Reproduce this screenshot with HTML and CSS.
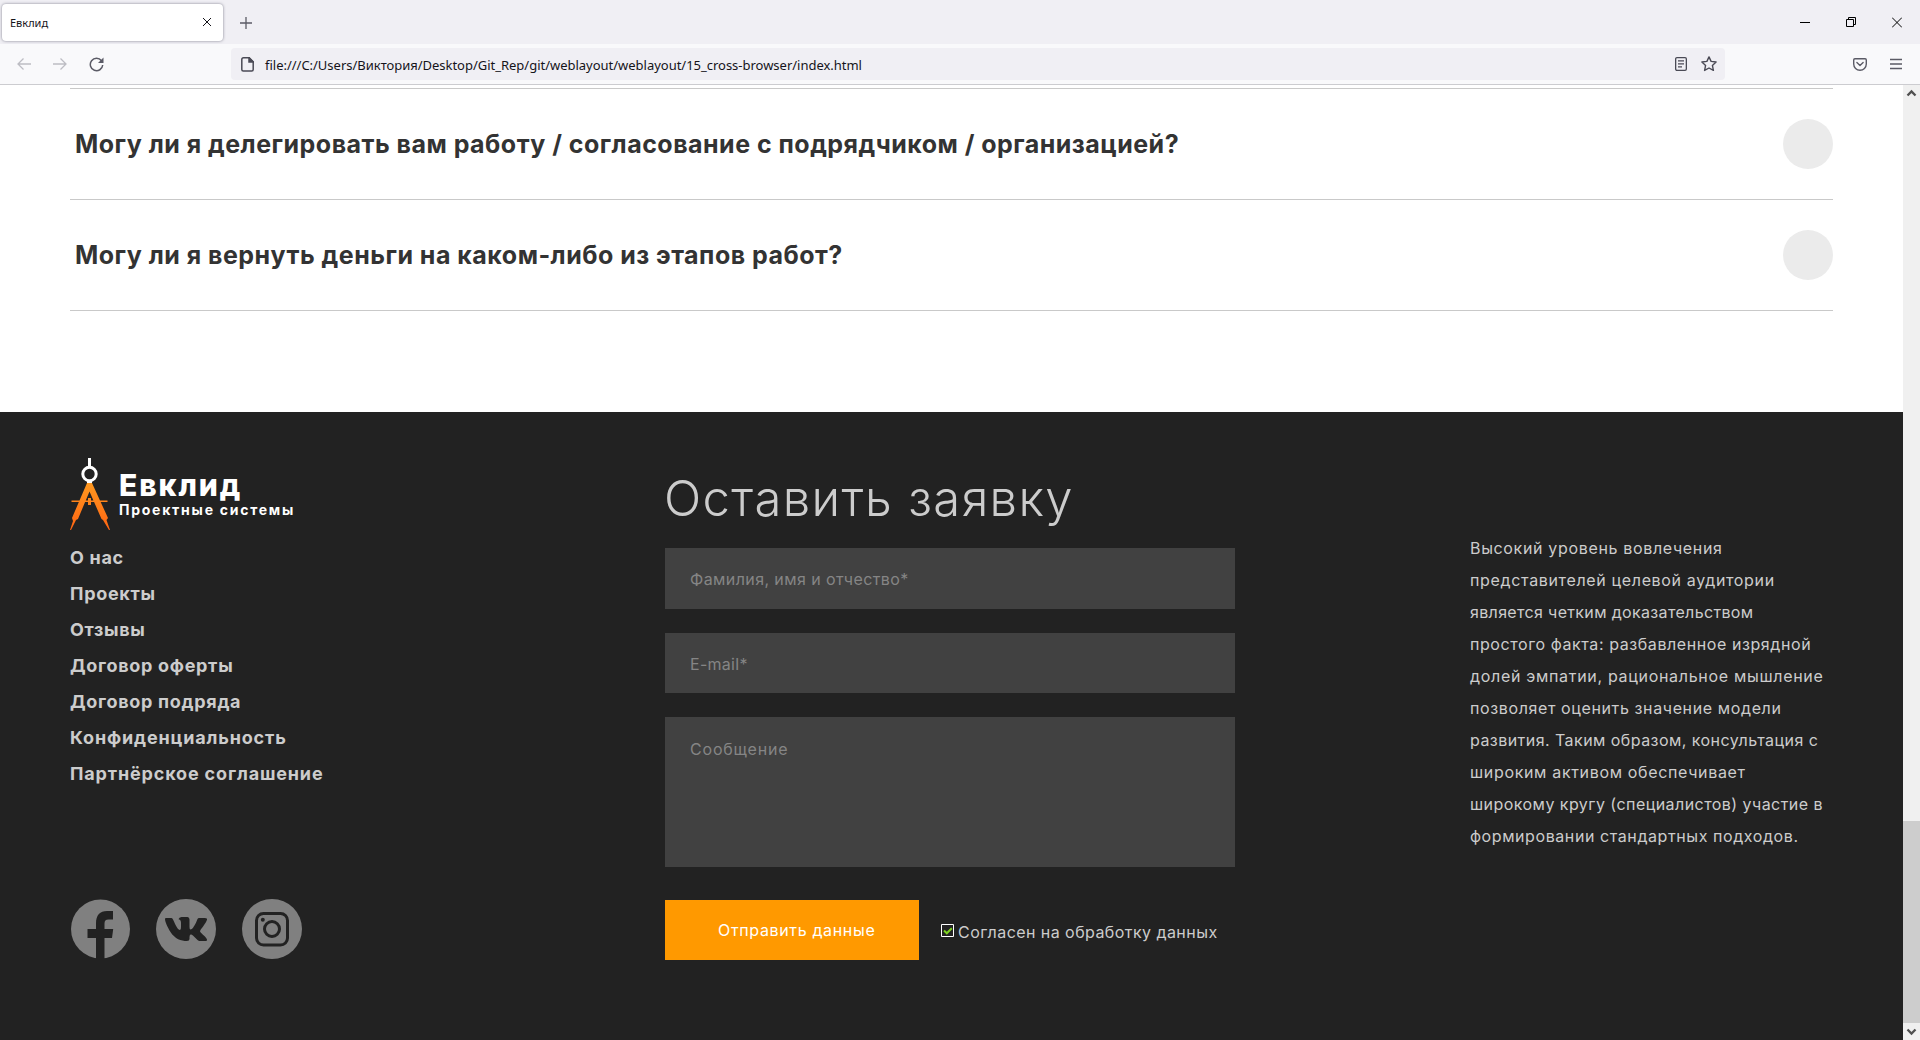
FILE: index.html
```html
<!DOCTYPE html>
<html lang="ru">
<head>
<meta charset="utf-8">
<title>Евклид</title>
<link rel="stylesheet" href="styles.css">
</head>
<body>
<div class="tabbar">
  <div class="tab"><span>Евклид</span>
    <svg width="10" height="10" viewBox="0 0 10 10" fill="none" stroke="#15141a" stroke-width="1"><path d="M1 1l8 8M9 1l-8 8"/></svg>
  </div>
  <svg class="newtab" width="12" height="12" viewBox="0 0 12 12" stroke="#5b5b66" stroke-width="1.3"><path d="M0 6h12M6 0v12"/></svg>
  <div class="winctl">
    <svg width="10" height="11" viewBox="0 0 10 11"><path d="M0 5h10v1H0z" fill="#000"/></svg>
    <svg width="10" height="11" viewBox="0 0 10 11" fill="none" stroke="#000"><path d="M.5 2.5h7v7h-7zM2.500 2.500v-2h7v7h-2"/></svg>
    <svg width="10" height="11" viewBox="0 0 10 11" fill="none" stroke="#000"><path d="M0 .5l10 10M10 .5l-10 10"/></svg>
  </div>
</div>
<div class="toolbar">
  <div class="navbtns">
    <svg width="14" height="14" viewBox="0 0 14 14" fill="none" stroke="#bdbdc3" stroke-width="1.3"><path d="M14 7H1M6.500 1.500L1 7l5.500 5.500"/></svg>
    <svg width="14" height="14" viewBox="0 0 14 14" fill="none" stroke="#bdbdc3" stroke-width="1.3"><path d="M0 7h13M7.500 1.500L13 7l-5.500 5.500"/></svg>
    <svg width="15" height="15" viewBox="0 0 15 15" fill="none" stroke="#5b5b66" stroke-width="1.5"><path d="M12.500 3.800A6.200 6.200 0 1 0 13.700 8"/><path d="M14.500 .5v5.500H9z" fill="#5b5b66" stroke="none"/></svg>
  </div>
  <div class="urlbar">
    <svg width="13" height="15" viewBox="0 0 13 15" fill="none" stroke="#4a4a55" stroke-width="1.5"><path d="M2.500 .8h5.700l4 4v7.700q0 1.500-1.500 1.500H2.300q-1.500 0-1.500-1.500v-10Q.8.800 2.500.8z"/><path d="M8 .8v4.200h4.200z" fill="#4a4a55"/></svg>
    <span class="url">file:///C:/Users/Виктория/Desktop/Git_Rep/git/weblayout/weblayout/15_cross-browser/index.html</span>
    <svg class="reader" width="12" height="14" viewBox="0 0 12 14" fill="none" stroke="#4a4a55" stroke-width="1.3"><rect x=".65" y=".65" width="10.700" height="12.700" rx="1.300"/><path d="M3 3.800h6M3 6.800h6M3 9.800h4"/></svg>
    <svg width="16" height="16" viewBox="0 0 16 16" fill="none" stroke="#4a4a55" stroke-width="1.4" stroke-linejoin="round"><path d="M8 .9l2.100 4.500 5 .6-3.700 3.400 1 5L8 12l-4.400 2.400 1-5L.9 6l5-.6z"/></svg>
  </div>
  <div class="tools">
    <svg width="14" height="13" viewBox="0 0 14 13" fill="none" stroke="#5b5b66" stroke-width="1.4" stroke-linecap="round" stroke-linejoin="round"><path d="M1.900.7h10.200q1.200 0 1.200 1.200v4.200a6.300 6.200 0 0 1-12.600 0V1.900Q.7.700 1.900.7z"/><path d="M3.900 4.500L7 7.500l3.100-3"/></svg>
    <svg width="12" height="12" viewBox="0 0 12 12" stroke="#5b5b66" stroke-width="1.300"><path d="M0 1.500h12M0 6h12M0 10.500h12"/></svg>
  </div>
</div>
<div class="viewport">
  <div class="page">
    <main class="faq">
      <div class="question"><h3>Могу ли я делегировать вам работу / согласование с подрядчиком / организацией?</h3><i></i></div>
      <div class="question"><h3>Могу ли я вернуть деньги на каком-либо из этапов работ?</h3><i></i></div>
    </main>
    <footer class="footer">
      <section class="company">
        <div class="logo">
          <svg width="40" height="72" viewBox="0 0 40 72" fill="none">
            <defs><linearGradient id="leg" gradientUnits="userSpaceOnUse" x1="0" y1="24" x2="0" y2="72"><stop stop-color="#ff9a20"/><stop offset="1" stop-color="#ff6412"/></linearGradient></defs>
            <path d="M18 0h3v9h-3zM17 23h5v3h-5z" fill="#fff"/>
            <circle cx="19.500" cy="16" r="6.700" stroke="#fff" stroke-width="3"/>
            <path d="M17 25h5l16 35-1.500 2L40 72h-1l-6-10-1.500-1L19.500 33.500 8 61l-2 1L1 72H0l3-9-1-3zM1.500 42.500h36V44h-36zM18 40h3v7h-3z" fill="url(#leg)"/>
          </svg>
          <div class="brand"><b>Евклид</b><span>Проектные системы</span></div>
        </div>
        <nav class="menu"><a>О нас</a><a>Проекты</a><a>Отзывы</a><a>Договор оферты</a><a>Договор подряда</a><a>Конфиденциальность</a><a>Партнёрское соглашение</a></nav>
        <div class="social">
          <svg width="60" height="60" viewBox="0 0 60 60"><circle cx="30.500" cy="30" r="29.500" fill="#808080"/><path d="M26 60V39h-8.500v-9H26v-5.500C26 16 30 12 37 12h6v8.500h-4.500c-3 0-4 1.500-4 4V30h8.700L42 39h-7.500v21z" fill="#222"/></svg>
          <svg width="60" height="60" viewBox="0 0 60 60"><circle cx="30" cy="30" r="30" fill="#808080"/><path d="M9 20q0-1 1-1h5.500q1 0 1.500 1.500C20 27 22 31 24 31q1 0 1-3v-4c0-2-.5-3-2.500-3.700Q23 18.500 25.500 18h6q2 0 2 2.500V28q0 2.500 1 2.500c2 0 5-5 7-10.500q.5-1 1.500-1H49q2.500 0 2 1.800C50 24 46 29 44.500 31q-1 1.200 0 2.200c3 3 6 5.500 6.500 7.300q.5 1.500-1.500 1.500H44c-1.500 0-2-.5-3.500-2-2.500-2.500-4.500-4.500-5.500-4.500-1.500 0-1.500 2-1.500 4.500q0 2-2.500 2c-6 0-12-2-16.500-9C11.500 28 9 23 9 20z" fill="#222"/></svg>
          <svg width="60" height="60" viewBox="0 0 60 60"><circle cx="30" cy="30" r="30" fill="#808080"/><g fill="none" stroke="#222" stroke-width="3"><rect x="14.500" y="14.500" width="31" height="31.500" rx="7"/><circle cx="30" cy="30" r="7.500"/></g><circle cx="20.800" cy="20.800" r="2" fill="#222"/></svg>
        </div>
      </section>
      <form class="request">
        <h2>Оставить заявку</h2>
        <input class="field name" placeholder="Фамилия, имя и отчество*">
        <input class="field mail" placeholder="E-mail*">
        <textarea class="field message" placeholder="Сообщение"></textarea>
        <div class="actions">
          <button type="button">Отправить данные</button>
          <svg width="13" height="13" viewBox="0 0 13 13" fill="none"><path d="M.5.5h12v12H.5z" stroke="#fff"/><path d="M3 6.500l2.800 2.800 5-5" stroke="#7ed321" stroke-width="2"/></svg>
          <label>Согласен на обработку данных</label>
        </div>
      </form>
      <p class="about">
        <span>Высокий уровень вовлечения</span>
        <span>представителей целевой аудитории</span>
        <span>является четким доказательством</span>
        <span>простого факта: разбавленное изрядной</span>
        <span>долей эмпатии, рациональное мышление</span>
        <span>позволяет оценить значение модели</span>
        <span>развития. Таким образом, консультация с</span>
        <span>широким активом обеспечивает</span>
        <span>широкому кругу (специалистов) участие в</span>
        <span>формировании стандартных подходов.</span>
      </p>
    </footer>
  </div>
  <div class="scrollbar">
    <svg width="17" height="17" viewBox="0 0 17 17" fill="none" stroke="#505050" stroke-width="2.300"><path d="M4.500 10.500l4-4 4 4"/></svg>
    <div class="thumb"></div>
    <svg width="17" height="17" viewBox="0 0 17 17" fill="none" stroke="#505050" stroke-width="2.300"><path d="M4.500 6.500l4 4 4-4"/></svg>
  </div>
</div>
</body>
</html>
```
FILE: styles.css
```css
* { box-sizing: border-box; }
body { margin: 0; height: 1040px; overflow: hidden; display: flex; flex-direction: column; background: #fff; font: 400 16px "Inter", sans-serif; }
svg { display: block; flex: none; }
h2, h3, p { margin: 0; }

.tabbar { height: 44px; background: #f0eff4; display: flex; align-items: center; padding: 0 0 0 2px; font: 11px "Noto Sans", sans-serif; color: #15141a; }
.tab { width: 221px; height: 37px; background: #fff; border-radius: 4px; box-shadow: 0 0 3px rgba(70,70,90,.65); display: flex; align-items: center; justify-content: space-between; padding: 0 11px 0 8px; }
.newtab { margin: 1px 0 0 17px; }
.winctl { margin-left: auto; display: flex; gap: 36px; padding-right: 18px; }

.toolbar { height: 41px; background: #f9f9fb; border-bottom: 1px solid #ccccd0; display: flex; align-items: center; }
.navbtns { width: 231px; display: flex; align-items: center; gap: 22px; padding-left: 17px; }
.urlbar { width: 1494px; height: 32px; background: #f0eff4; border-radius: 4px; display: flex; align-items: center; padding: 0 8px 0 10px; }
.url { margin-left: 11px; font: 13px/18px "Noto Sans", sans-serif; letter-spacing: -.016px; color: #15141a; padding-top: 1px; }
.reader { margin: 0 14px 0 auto; }
.tools { margin-left: auto; display: flex; align-items: center; gap: 23px; padding-right: 18px; }

.viewport { flex: 1; display: flex; }
.page { flex: 1; display: flex; flex-direction: column; }
.faq { height: 327px; padding: 3px 70px 0; }
.question { height: 111px; border-bottom: 1px solid #c9c9c9; display: flex; align-items: center; justify-content: space-between; padding-left: 5px; }
.question:first-child { height: 112px; border-top: 1px solid #c9c9c9; }
.question h3 { font-size: 25px; font-weight: 700; line-height: 30px; letter-spacing: .48px; color: #333; }
.question i { width: 50px; height: 50px; border-radius: 50%; background: #ebebeb; }

.footer { flex: 1; background: #222; color: #ccc; display: flex; padding-left: 70px; }
.company { width: 595px; padding-top: 46px; }
.logo { display: flex; gap: 9px; color: #fff; height: 82px; }
.brand { padding-top: 9px; }
.brand b { display: block; font-size: 30px; font-weight: 800; line-height: 36px; letter-spacing: 1.9px; }
.brand span { display: block; font-size: 14px; font-weight: 700; line-height: 14px; letter-spacing: 1.75px; }
.menu { display: flex; flex-direction: column; font-size: 18px; font-weight: 700; line-height: 36px; letter-spacing: .7px; }
.menu a:nth-child(n+6) { letter-spacing: .84px; }
.social { margin-top: 107px; display: flex; gap: 26px; }

.request { width: 570px; padding-top: 57px; display: flex; flex-direction: column; }
.request h2 { font-size: 49px; font-weight: 300; line-height: 60px; letter-spacing: 1.35px; margin: 0 0 19px -1px; white-space: nowrap; }
.field { display: block; width: 100%; border: 0; margin: 0; outline: 0; resize: none; background: #414141; font: inherit; letter-spacing: .41px; }
.field::placeholder { color: #858585; opacity: 1; }
.name { height: 61px; padding: 0 25px; margin-bottom: 24px; }
.mail { height: 60px; padding: 1px 25px 0; margin-bottom: 24px; letter-spacing: .28px; }
.message { height: 150px; padding: 22px 25px; line-height: 20px; margin-bottom: 33px; letter-spacing: .8px; overflow: hidden; }
.actions { display: flex; align-items: center; }
.actions button { width: 254px; height: 60px; border: 0; padding: 0 0 0 53px; background: #ff9900; color: #fff; font: inherit; letter-spacing: .65px; text-align: left; margin-right: 22px; }
.actions label { margin: 3px 0 0 4px; letter-spacing: .44px; white-space: nowrap; }

.about { margin-left: 235px; padding-top: 120px; line-height: 32px; }
.about span { display: block; white-space: nowrap; letter-spacing: .66px; }
.about span:nth-child(3) { letter-spacing: .34px; }
.about span:nth-child(4), .about span:nth-child(10) { letter-spacing: .58px; }
.about span:nth-child(5) { letter-spacing: .69px; }
.about span:nth-child(6) { letter-spacing: .62px; }
.about span:nth-child(7), .about span:nth-child(9) { letter-spacing: .45px; }

.scrollbar { width: 17px; background: #f0f0f0; display: flex; flex-direction: column; }
.thumb { height: 202px; margin-top: auto; background: #cdcdcd; }
```
